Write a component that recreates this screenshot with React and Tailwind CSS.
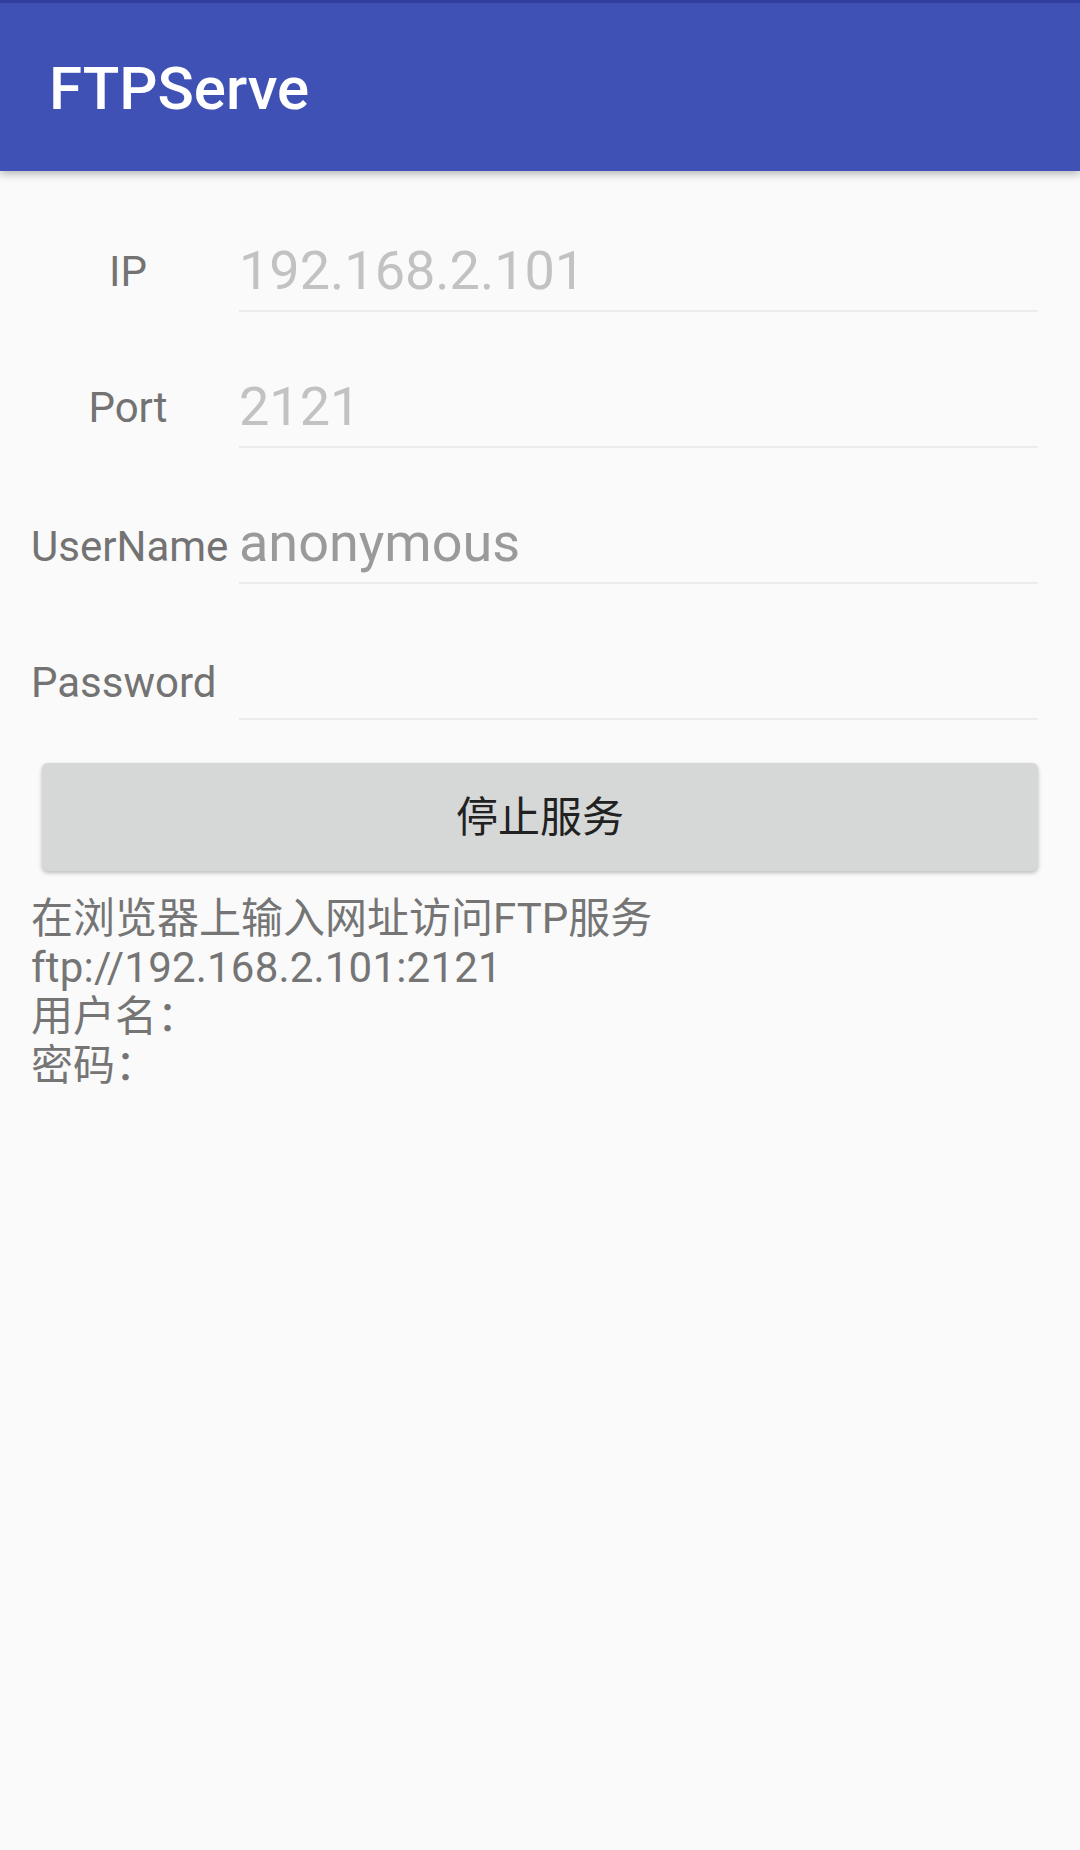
export default function App() {
  const rows = [
    { label: 'IP', value: '192.168.2.101', align: 'text-center', lpb: 'pb-[19px]', color: 'text-[#c2c2c2]' },
    { label: 'Port', value: '2121', align: 'text-center', lpb: 'pb-[19px]', color: 'text-[#c2c2c2]' },
    { label: 'UserName', value: 'anonymous', align: 'text-left', lpb: 'pb-[16px]', color: 'text-[#9a9a9a]' },
    { label: 'Password', value: '', align: 'text-left', lpb: 'pb-[16px]', color: 'text-[#9a9a9a]' },
  ];
  return (
    <div className="min-h-[1850px] w-[1080px] bg-[#fafafa] font-['Roboto','Noto_Sans_CJK_SC',sans-serif]">
      <header className="relative z-10 flex h-[171px] items-center border-t-[3px] border-[#303f9f] bg-[#3f51b5] pl-[49px] shadow-[0_3px_8px_rgba(0,0,0,0.28)]">
        <h1 className="mt-[4px] text-[60px] font-medium leading-none text-white">FTPServe</h1>
      </header>
      <div className="pt-[5px]">
        {rows.map((r) => (
          <div key={r.label} className="flex h-[136px] items-end pl-[31px] pr-[42px]">
            <div className={`w-[194px] text-[42px] leading-none text-[#737373] ${r.align} ${r.lpb}`}>{r.label}</div>
            <div className={`ml-[14px] flex-1 border-b-2 border-[#ececec] pb-[12px] text-[54px] leading-none ${r.color}`}>
              {r.value || '\u00a0'}
            </div>
          </div>
        ))}
      </div>
      <div className="mx-[42px] mt-[43px] flex h-[108px] items-center justify-center rounded-[6px] bg-[#d6d7d7] text-[42px] text-[#212121] shadow-[0_2px_4px_rgba(0,0,0,0.25)]">
        停止服务
      </div>
      <div className="mt-[23px] pl-[31px] text-[42px] leading-[49px] text-[#757575]">
        <div>在浏览器上输入网址访问FTP服务</div>
        <div className="tracking-[0.2px]">ftp://192.168.2.101:2121</div>
        <div>用户名：</div>
        <div>密码：</div>
      </div>
    </div>
  );
}
